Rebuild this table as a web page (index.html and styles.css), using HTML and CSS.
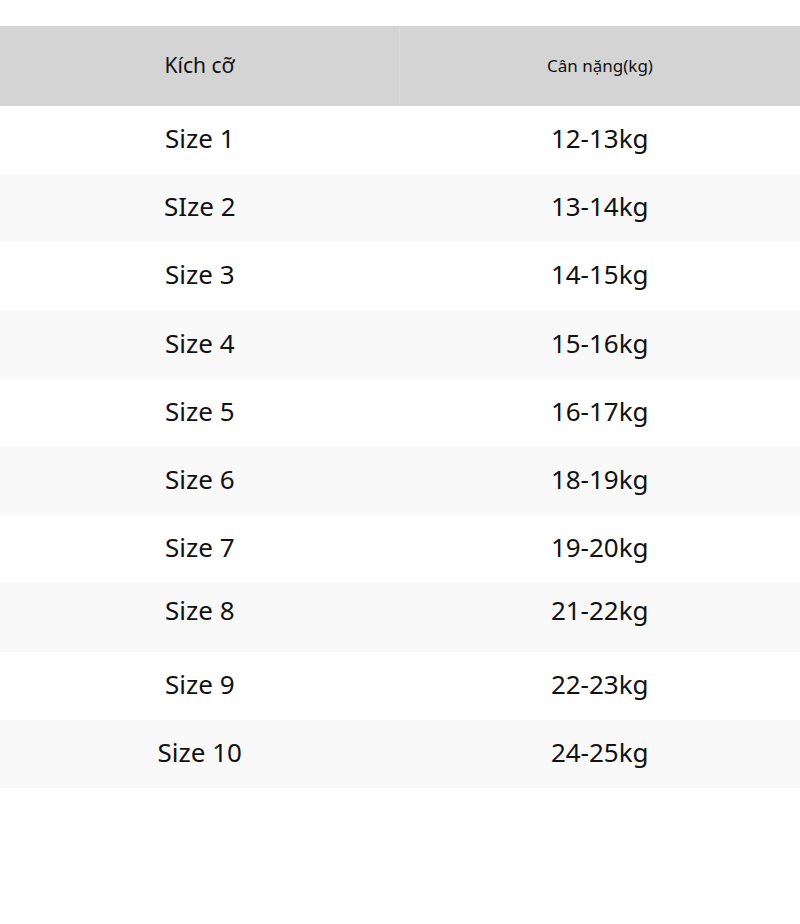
FILE: index.html
```html
<!DOCTYPE html>
<html lang="vi">
<head>
<meta charset="utf-8">
<link rel="stylesheet" href="styles.css">
</head>
<body>
<table class="size-table">
  <thead>
    <tr>
      <th class="h-size">Kích cỡ</th>
      <th class="h-weight">Cân nặng(kg)</th>
    </tr>
  </thead>
  <tbody>
    <tr><td>Size 1</td><td>12-13kg</td></tr>
    <tr><td>SIze 2</td><td>13-14kg</td></tr>
    <tr><td>Size 3</td><td>14-15kg</td></tr>
    <tr><td>Size 4</td><td>15-16kg</td></tr>
    <tr><td>Size 5</td><td>16-17kg</td></tr>
    <tr><td>Size 6</td><td>18-19kg</td></tr>
    <tr><td>Size 7</td><td>19-20kg</td></tr>
    <tr class="shift"><td>Size 8</td><td>21-22kg</td></tr>
    <tr><td>Size 9</td><td>22-23kg</td></tr>
    <tr><td>Size 10</td><td>24-25kg</td></tr>
  </tbody>
</table>
</body>
</html>
```
FILE: styles.css
```css
html, body {
  margin: 0;
  padding: 0;
  background: #ffffff;
}
body {
  padding-top: 26px;
  font-family: "Noto Sans", "Open Sans", sans-serif;
  color: #111111;
}
.size-table {
  width: 800px;
  border-collapse: collapse;
  table-layout: fixed;
}
.size-table th {
  background: #d4d4d4;
  height: 78px;
  padding: 0 0 2px 0;
  font-weight: 400;
  text-align: center;
  vertical-align: middle;
}
.size-table th.h-size {
  width: 399px;
  font-size: 21px;
  border-right: 1px solid #dadada;
}
.size-table th.h-weight {
  font-size: 17px;
}
.size-table td {
  height: 64.2px;
  padding: 0 0 4px 0;
  text-align: center;
  vertical-align: middle;
  font-size: 26px;
}
.size-table tbody tr:nth-child(even) td {
  background: #f9f9f9;
}
.size-table tr.shift td {
  height: 54.2px;
  padding-bottom: 14px;
}
```
